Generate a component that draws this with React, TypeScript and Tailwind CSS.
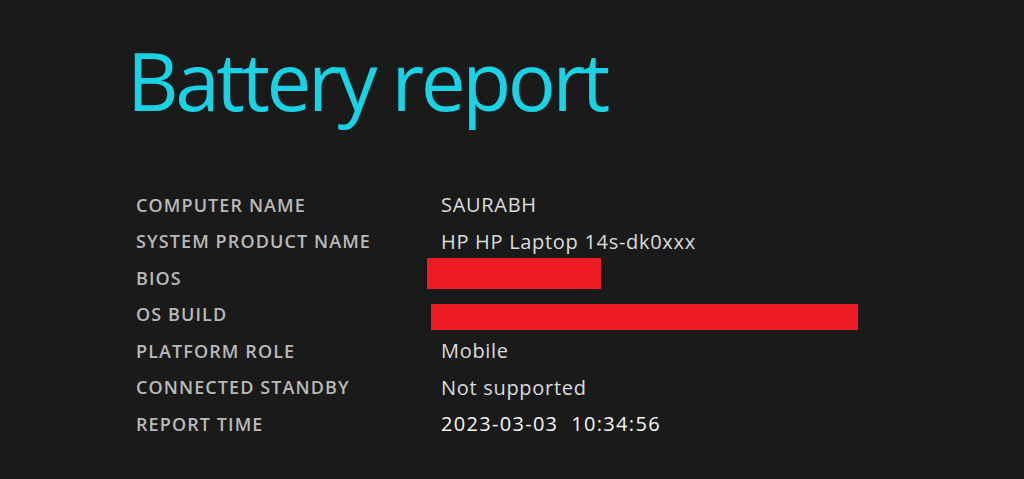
import React from 'react';

const rows: { label: string; value?: string; redact?: string; strong?: boolean }[] = [
  { label: 'COMPUTER NAME', value: 'SAURABH' },
  { label: 'SYSTEM PRODUCT NAME', value: 'HP HP Laptop 14s-dk0xxx' },
  { label: 'BIOS', redact: 'bios' },
  { label: 'OS BUILD', redact: 'os' },
  { label: 'PLATFORM ROLE', value: 'Mobile' },
  { label: 'CONNECTED STANDBY', value: 'Not supported' },
  { label: 'REPORT TIME', value: '2023-03-03\u00a0\u00a010:34:56', strong: true },
];

export default function App() {
  return (
    <div
      className="w-[1024px] h-[479px] bg-[#1b1a1a] overflow-hidden pl-[127px] pt-[30px]"
      style={{ fontFamily: '"Open Sans", "Noto Sans", sans-serif' }}
    >
      {/* Title */}
      <h1 className="text-[80px] leading-[100px] text-[#19d3e4] tracking-[-3.4px]">
        Battery report
      </h1>

      {/* Summary table */}
      <div className="mt-[57px] pl-[9px] grid grid-cols-[305px_1fr]">
        {rows.map((r) => (
          <React.Fragment key={r.label}>
            <div className="h-[36.5px] flex items-center text-[18px] font-semibold text-[#b9b9b9] tracking-[1.1px]">
              {r.label}
            </div>
            <div className="h-[36.5px] flex items-center">
              {r.redact === 'bios' && (
                <div className="w-[174px] h-[31px] bg-[#ed1c24] -ml-[14px] mt-[-9px]" />
              )}
              {r.redact === 'os' && (
                <div className="w-[427px] h-[26px] bg-[#ed1c24] -ml-[10px] mt-[5px]" />
              )}
              {r.value && (
                <span
                  className={
                    'text-[20px] ' +
                    (r.strong
                      ? 'font-medium text-[#f6f6f6] tracking-[1.3px]'
                      : 'text-[#dcdcdc] tracking-[0.7px]')
                  }
                >
                  {r.value}
                </span>
              )}
            </div>
          </React.Fragment>
        ))}
      </div>
    </div>
  );
}
